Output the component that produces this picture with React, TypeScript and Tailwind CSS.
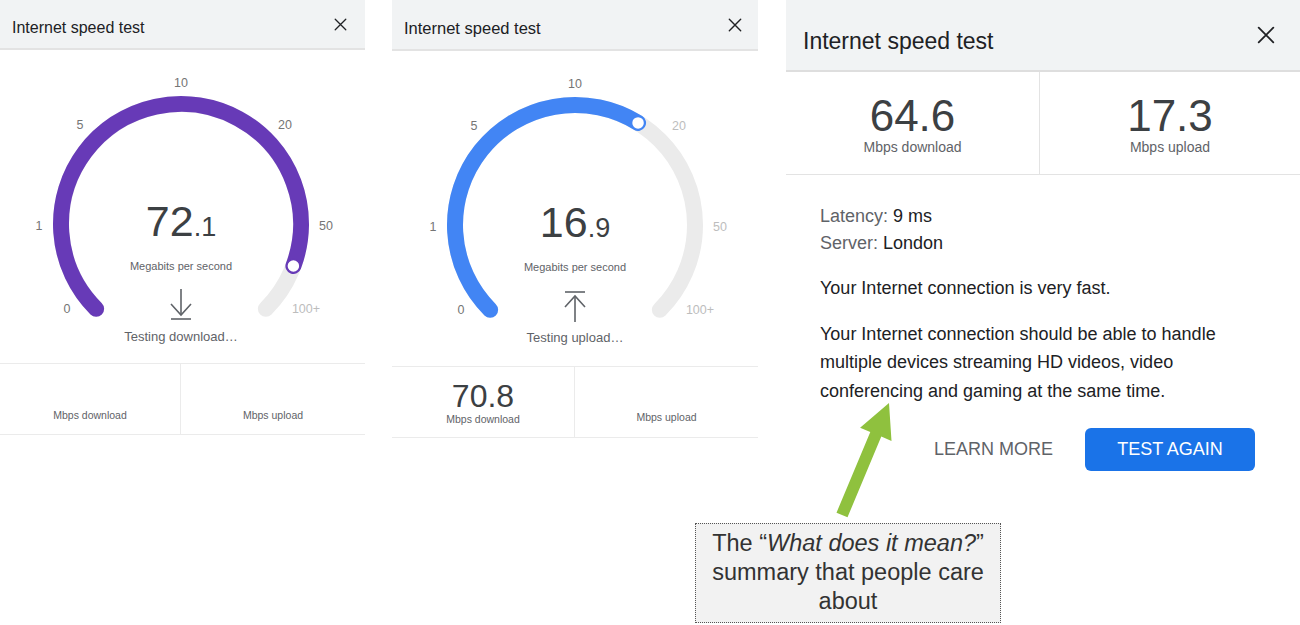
import React from 'react'

const polar = (cx: number, cy: number, r: number, deg: number) => {
  const a = (deg * Math.PI) / 180
  return [cx + r * Math.sin(a), cy - r * Math.cos(a)]
}

const arcPath = (cx: number, cy: number, r: number, a0: number, a1: number) => {
  const [x0, y0] = polar(cx, cy, r, a0)
  const [x1, y1] = polar(cx, cy, r, a1)
  const large = a1 - a0 > 180 ? 1 : 0
  return `M ${x0} ${y0} A ${r} ${r} 0 ${large} 1 ${x1} ${y1}`
}

const CloseIcon = ({ size }: { size: number }) => (
  <svg width={size} height={size} viewBox="0 0 16 16" className="block">
    <path d="M1.5 1.5 L14.5 14.5 M14.5 1.5 L1.5 14.5" stroke="#202124" strokeWidth="1.6" strokeLinecap="round" />
  </svg>
)

type Tick = { t: string; dx: number; dy: number; dim: boolean }

const Gauge = ({
  width,
  height,
  cx,
  color,
  angle,
  big,
  small,
  dir,
  status,
  ticks,
}: {
  width: number
  height: number
  cx: number
  color: string
  angle: number
  big: string
  small: string
  dir: 'down' | 'up'
  status: string
  ticks: Tick[]
}) => {
  const cy = 174
  const r = 120
  const [kx, ky] = polar(cx, cy, r, angle)
  return (
    <svg width={width} height={height} className="block">
      <path d={arcPath(cx, cy, r, -135, 135)} stroke="#ebebeb" strokeWidth="16" fill="none" strokeLinecap="round" />
      <path d={arcPath(cx, cy, r, -135, angle)} stroke={color} strokeWidth="16" fill="none" strokeLinecap="round" />
      <circle cx={kx} cy={ky} r="6.5" fill="#fff" stroke={color} strokeWidth="1.5" />
      {ticks.map((k) => (
        <text key={k.t} x={cx + k.dx} y={cy + k.dy} textAnchor="middle" fontSize="12.5" fill={k.dim ? '#bdbdbd' : '#757575'}>
          {k.t}
        </text>
      ))}
      <text x={cx} y={cy + 12} textAnchor="middle" fill="#3c4043">
        <tspan fontSize="43">{big}</tspan>
        <tspan fontSize="27">{small}</tspan>
      </text>
      <text x={cx} y={cy + 46} textAnchor="middle" fontSize="11" fill="#5f6368">
        Megabits per second
      </text>
      {dir === 'down' ? (
        <g stroke="#5f6368" strokeWidth="1.6" fill="none">
          <path d={`M ${cx} ${cy + 65} V ${cy + 91}`} />
          <path d={`M ${cx - 10} ${cy + 80} L ${cx} ${cy + 91} L ${cx + 10} ${cy + 80}`} />
          <path d={`M ${cx - 10} ${cy + 95} H ${cx + 10}`} />
        </g>
      ) : (
        <g stroke="#5f6368" strokeWidth="1.6" fill="none">
          <path d={`M ${cx - 10} ${cy + 67} H ${cx + 10}`} />
          <path d={`M ${cx} ${cy + 71} V ${cy + 97}`} />
          <path d={`M ${cx - 10} ${cy + 82} L ${cx} ${cy + 71} L ${cx + 10} ${cy + 82}`} />
        </g>
      )}
      <text x={cx} y={cy + 117} textAnchor="middle" fontSize="13" fill="#5f6368">
        {status}
      </text>
    </svg>
  )
}

const mkTicks = (dimFrom: number): Tick[] => {
  const base = [
    { t: '0', dx: -114, dy: 89 },
    { t: '1', dx: -142, dy: 6 },
    { t: '5', dx: -101, dy: -95 },
    { t: '10', dx: 0, dy: -137 },
    { t: '20', dx: 104, dy: -95 },
    { t: '50', dx: 145, dy: 6 },
    { t: '100+', dx: 125, dy: 89 },
  ]
  return base.map((b, i) => ({ ...b, dim: i >= dimFrom }))
}

export default function App() {
  return (
    <div className="relative flex w-[1300px] h-[625px] bg-white font-['Liberation_Sans',Arial,sans-serif] overflow-hidden">
      {/* panel 1 */}
      <div className="w-[365px] shrink-0">
        <div className="h-[50px] bg-[#f1f3f4] border-b-2 border-[#e3e3e3] flex items-center justify-between pl-[12px] pr-[18px]">
          <span className="text-[16px] text-[#202124] pt-[8px]">Internet speed test</span>
          <CloseIcon size={13} />
        </div>
        <Gauge width={365} height={313} cx={181} color="#673ab7" angle={110.5} big="72" small=".1" dir="down" status="Testing download…" ticks={mkTicks(6)} />
        <div className="flex h-[72px] border-y border-[#ebebeb]">
          <div className="w-[181px] border-r border-[#ebebeb] flex items-end justify-center pb-[10px] text-[10.5px] text-[#5f6368]">Mbps download</div>
          <div className="flex-1 flex items-end justify-center pb-[10px] text-[10.5px] text-[#5f6368]">Mbps upload</div>
        </div>
      </div>

      {/* panel 2 */}
      <div className="ml-[27px] w-[366px] shrink-0">
        <div className="h-[51px] bg-[#f1f3f4] border-b-2 border-[#e3e3e3] flex items-center justify-between pl-[12px] pr-[16px]">
          <span className="text-[16.5px] text-[#202124] pt-[8px]">Internet speed test</span>
          <CloseIcon size={14} />
        </div>
        <Gauge width={366} height={315} cx={183} color="#4285f4" angle={31.7} big="16" small=".9" dir="up" status="Testing upload…" ticks={mkTicks(4)} />
        <div className="flex h-[72px] border-y border-[#ebebeb]">
          <div className="w-[183px] border-r border-[#ebebeb] flex flex-col items-center justify-end pb-[11px] text-[#5f6368]">
            <span className="text-[32px] leading-none text-[#3c4043]">70.8</span>
            <span className="text-[10.5px] leading-[14px]">Mbps download</span>
          </div>
          <div className="flex-1 flex items-end justify-center pb-[11px] text-[10.5px] text-[#5f6368]">Mbps upload</div>
        </div>
      </div>

      {/* panel 3 */}
      <div className="ml-[28px] w-[514px] shrink-0">
        <div className="h-[72px] bg-[#f1f3f4] border-b-2 border-[#dedede] flex items-center justify-between pl-[17px] pr-[25px]">
          <span className="text-[23px] text-[#202124] pt-[12px]">Internet speed test</span>
          <CloseIcon size={18} />
        </div>
        <div className="flex h-[103px] border-b border-[#e3e3e3]">
          <div className="w-[254px] border-r border-[#e3e3e3] flex flex-col items-center justify-center pt-[4px]">
            <span className="text-[44px] leading-none text-[#3c4043]">64.6</span>
            <span className="text-[14px] leading-[18px] text-[#5f6368]">Mbps download</span>
          </div>
          <div className="flex-1 flex flex-col items-center justify-center pt-[4px]">
            <span className="text-[44px] leading-none text-[#3c4043]">17.3</span>
            <span className="text-[14px] leading-[18px] text-[#5f6368]">Mbps upload</span>
          </div>
        </div>
        <div className="pl-[34px] pr-[45px] pt-[28px] text-[18px] text-[#202124]">
          <div className="leading-[27px]">
            <div>
              <span className="text-[#5f6368]">Latency:</span> 9 ms
            </div>
            <div>
              <span className="text-[#5f6368]">Server:</span> London
            </div>
          </div>
          <p className="mt-[17px] leading-[28.5px]">Your Internet connection is very fast.</p>
          <p className="mt-[17px] leading-[28.5px]">
            Your Internet connection should be able to handle multiple devices streaming HD videos, video conferencing and gaming at the same time.
          </p>
          <div className="mt-[23px] flex justify-end items-center">
            <span className="mr-[32px] text-[#5f6368]">LEARN MORE</span>
            <button className="w-[170px] h-[43px] rounded-[6px] bg-[#1a73e8] text-white text-[18px]">TEST AGAIN</button>
          </div>
        </div>
      </div>

      {/* annotation */}
      <svg className="absolute left-0 top-0 pointer-events-none" width={1300} height={625}>
        <polygon
          points="836.5,512.7 870.3,432 860.1,427.7 889,403 891.5,440.9 881.3,436.6 847.5,517.3"
          fill="#8fc13e"
        />
      </svg>
      <div className="absolute left-[695px] top-[523px] w-[306px] h-[100px] border border-dotted border-[#555] bg-[#f2f2f2] pt-[5px] text-center text-[23.5px] leading-[29px] text-[#333]">
        The “<i>What does it mean?</i>”<br />
        summary that people care<br />
        about
      </div>
    </div>
  )
}
